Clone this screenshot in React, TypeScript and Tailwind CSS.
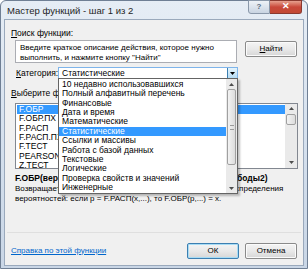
const categories = [
  "10 недавно использовавшихся",
  "Полный алфавитный перечень",
  "Финансовые",
  "Дата и время",
  "Математические",
  "Статистические",
  "Ссылки и массивы",
  "Работа с базой данных",
  "Текстовые",
  "Логические",
  "Проверка свойств и значений",
  "Инженерные",
];

const functions = ["F.ОБР", "F.ОБР.ПХ", "F.РАСП", "F.РАСП.ПХ", "F.ТЕСТ", "PEARSON", "Z.ТЕСТ"];

function WinButton({ label, accent, primary }: { label: string; accent?: number; primary?: boolean }) {
  const text =
    accent === undefined ? (
      label
    ) : (
      <>
        <span className="underline">{label[accent]}</span>
        {label.slice(accent + 1)}
      </>
    );
  return (
    <div
      className={
        "flex h-[16px] w-[52px] items-center justify-center rounded-[2px] border bg-gradient-to-b from-[#f4f4f4] via-[#e9e9e9] to-[#d6d6d6] text-[8px] " +
        (primary ? "border-[#3c7fb1] shadow-[inset_0_0_0_1px_#a8dcf5]" : "border-[#8a8a8a] shadow-[inset_0_0_0_1px_#fbfbfb]")
      }
    >
      {text}
    </div>
  );
}

function ScrollArrow({ up }: { up?: boolean }) {
  return (
    <div className="flex h-[10px] items-center justify-center">
      <svg width="5" height="3" viewBox="0 0 5 3">
        <path d={up ? "M0 3 L2.5 0 L5 3 Z" : "M0 0 L2.5 3 L5 0 Z"} fill="#4d4d4d" />
      </svg>
    </div>
  );
}

export default function App() {
  return (
    <div className="h-[269px] w-[308px] bg-white font-['Liberation_Sans',Arial,sans-serif] text-[8.5px] text-black">
      <div className="flex h-full w-full flex-col rounded-t-[6px] border border-[#6f7f94] bg-gradient-to-b from-[#e6edf5] via-[#d6e1ee] to-[#c9d6e6] px-[3px] pb-[2px]">
        {/* title bar */}
        <div className="flex h-[18px] items-start">
          <div className="flex h-full items-center pl-[3px] pt-[2px] text-[9.5px] text-[#1e1e1e]">
            Мастер функций - шаг 1 из 2
          </div>
          <div className="ml-auto mr-[2px] mt-[-1px] flex">
            <div className="flex h-[14px] w-[22px] items-center justify-center rounded-bl-[3px] border border-[#8a98aa] bg-gradient-to-b from-[#eef2f7] to-[#c9d4e2] text-[8px] font-bold text-[#5a6a80]">
              ?
            </div>
            <div className="flex h-[14px] w-[32px] items-center justify-center rounded-br-[3px] border border-l-0 border-[#8a3a30] bg-gradient-to-b from-[#e6a08f] via-[#c9483a] to-[#c24a35] text-[9px] font-bold text-white">
              ✕
            </div>
          </div>
        </div>

        {/* client area */}
        <div className="relative flex flex-1 flex-col border border-[#9aa9bc] bg-[#f0f0f0]">
          <div className="pl-[6px] pt-[8px] leading-[11px]">
            <span className="underline">П</span>оиск функции:
          </div>
          <div className="mt-[1px] flex items-start">
            <div className="ml-[10px] h-[23px] w-[222px] border border-[#abadb3] bg-white pl-[4px] pt-[2px] text-[8px] leading-[10px]">
              <div>Введите краткое описание действия, которое нужно</div>
              <div>выполнить, и нажмите кнопку "Найти"</div>
            </div>
            <div className="ml-[8px] mt-[1px]">
              <WinButton label="Найти" accent={0} />
            </div>
          </div>
          <div className="mt-[4px] flex items-center">
            <div className="w-[53px] pl-[11px]">
              <span className="underline">К</span>атегория:
            </div>
            <div className="flex h-[12px] w-[180px] items-center border border-[#7eb4ea] bg-white pl-[3px]">
              <span className="flex-1">Статистические</span>
              <div className="flex h-full w-[10px] items-center justify-center border-l border-[#3c7fb1] bg-gradient-to-b from-[#e5f4fc] to-[#b6dcf4]">
                <svg width="5" height="3" viewBox="0 0 5 3">
                  <path d="M0 0 L2.5 3 L5 0 Z" fill="#000" />
                </svg>
              </div>
            </div>
          </div>
          <div className="mt-[8px] pl-[6px] leading-[11px]">
            <span className="underline">В</span>ыберите функцию:
          </div>
          <div className="ml-[10px] mt-[4px] flex h-[66px] w-[283px] border border-[#828790] bg-white">
            <div className="flex-1 pl-[1px] pt-[1px]">
              {functions.map((f, i) => (
                <div
                  key={f}
                  className={"h-[9.4px] pl-[2px] leading-[9.4px] " + (i === 0 ? "bg-[#3399ff] text-white" : "")}
                >
                  {f}
                </div>
              ))}
            </div>
            <div className="flex w-[12px] flex-col bg-[#eaeaea]">
              <ScrollArrow up />
              <div className="mx-auto h-[11px] w-[10px] rounded-[2px] border border-[#a0a0a0] bg-gradient-to-r from-[#f3f3f3] to-[#dcdcdc]" />
              <div className="flex-1" />
              <ScrollArrow />
            </div>
          </div>
          <div className="mt-[4px] whitespace-nowrap pl-[10px] font-bold leading-[10px] text-[8.5px]">
            F.ОБР(вероятность;степени_свободы1;степени_свободы2)
          </div>
          <div className="mt-[1px] whitespace-nowrap pl-[10px] text-[8px] leading-[10px]">
            <div>Возвращает обратное значение для (левостороннего) F-распределения</div>
            <div>вероятностей: если p = F.РАСП(x,...), то F.ОБР(p,...) = x.</div>
          </div>
          <div className="mt-auto mx-[2px] border-t border-[#dfdfdf]" />
          <div className="mb-[7px] mt-[10px] flex h-[15px] items-center">
            <div className="pl-[6px] text-[8px] text-[#0066cc] underline">Справка по этой функции</div>
            <div className="ml-auto mr-[6px] flex gap-[6px]">
              <WinButton label="ОК" primary />
              <WinButton label="Отмена" />
            </div>
          </div>

          {/* open category dropdown */}
          <div className="absolute left-[53px] top-[58px] flex h-[116px] w-[180px] border border-[#646464] bg-white shadow-[2px_2px_2px_rgba(0,0,0,0.25)]">
            <div className="flex-1 pt-[1px]">
              {categories.map((c, i) => (
                <div
                  key={c}
                  className={"h-[9.36px] pl-[3px] leading-[9.36px] " + (i === 5 ? "bg-[#3399ff] text-white" : "")}
                >
                  {c}
                </div>
              ))}
            </div>
            <div className="flex w-[11px] flex-col bg-[#eaeaea]">
              <ScrollArrow up />
              <div className="mx-auto flex h-[76px] w-[9px] items-center justify-center rounded-[2px] border border-[#a0a0a0] bg-gradient-to-r from-[#f3f3f3] to-[#dcdcdc]">
                <div className="h-[5px] w-[4px] border-y border-[#9a9a9a]" />
              </div>
              <div className="flex-1" />
              <ScrollArrow />
            </div>
          </div>
        </div>
      </div>
    </div>
  );
}
